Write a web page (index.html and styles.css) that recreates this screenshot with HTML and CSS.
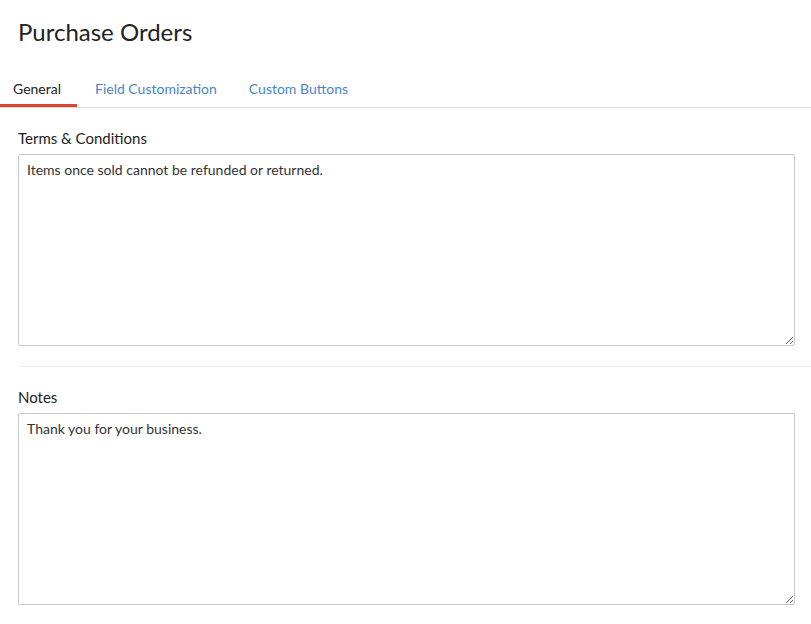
FILE: index.html
```html
<!DOCTYPE html>
<html>
<head>
<meta charset="utf-8">
<link rel="stylesheet" href="styles.css">
</head>
<body>
<div class="page">
  <h1 class="title">Purchase Orders</h1>
  <nav class="tabs">
    <a class="tab active">General</a>
    <a class="tab">Field Customization</a>
    <a class="tab">Custom Buttons</a>
  </nav>
  <section class="field">
    <label class="label">Terms &amp; Conditions</label>
    <textarea class="box">Items once sold cannot be refunded or returned.</textarea>
  </section>
  <hr class="divider">
  <section class="field">
    <label class="label">Notes</label>
    <textarea class="box">Thank you for your business.</textarea>
  </section>
</div>
</body>
</html>
```
FILE: styles.css
```css
html, body {
  margin: 0;
  padding: 0;
  background: #fff;
}
body {
  font-family: Lato, "Open Sans", sans-serif;
  color: #212121;
}
.page {
  padding-top: 18px;
}
.title {
  margin: 0 0 0 18px;
  font-size: 24px;
  font-weight: 400;
  line-height: 28px;
  color: #222;
}
.tabs {
  display: flex;
  margin-top: 31px;
  border-bottom: 1px solid #dadada;
  height: 30px;
}
.tab {
  font-size: 14px;
  line-height: 18px;
  padding: 3px 0 0 0;
  color: #4a85c9;
  white-space: nowrap;
}
.tab.active {
  color: #222;
  border-bottom: 3px solid #d9472d;
  width: 64px;
  padding-left: 13px;
}
.tab:nth-child(2) {
  margin-left: 18px;
}
.tab:nth-child(3) {
  margin-left: 32px;
}
.field {
  padding: 21px 16px 0 18px;
  display: flex;
  flex-direction: column;
}
.label {
  font-size: 15px;
  line-height: 18px;
  color: #222;
  margin-bottom: 7px;
}
.box {
  box-sizing: border-box;
  height: 192px;
  width: 777px;
  border: 1px solid #c8c8c8;
  border-radius: 2px;
  padding: 6px 8px;
  font-family: Lato, "Open Sans", sans-serif;
  font-size: 14px;
  line-height: 18px;
  color: #333;
  resize: both;
  margin: 0;
}
.divider {
  border: 0;
  border-top: 1px solid #ececec;
  margin: 20px 0 0 18px;
}
```
